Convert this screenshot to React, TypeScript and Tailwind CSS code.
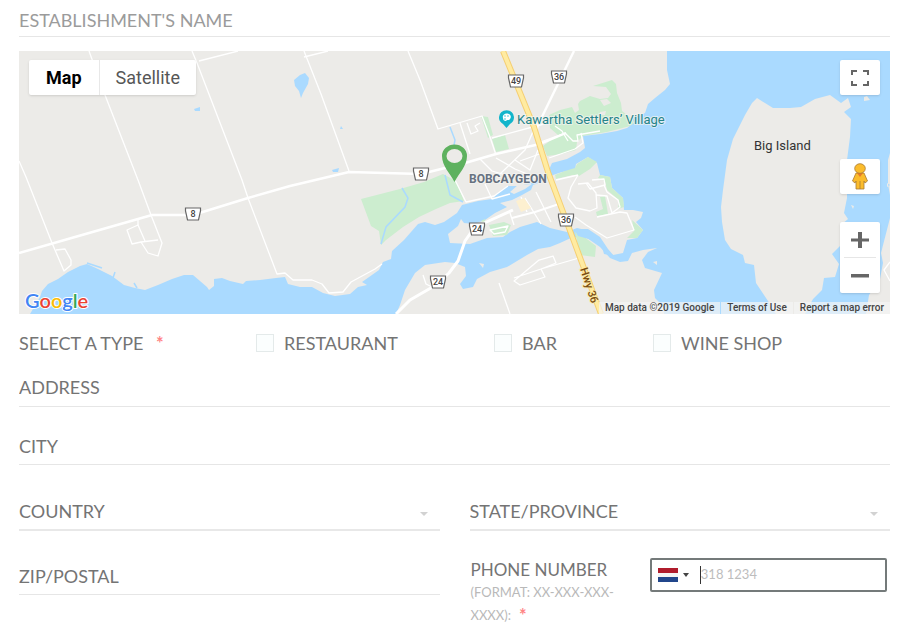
import { useId } from 'react'

const LABEL_FONT = "font-['Lato','Noto_Sans',sans-serif]"
const MAP_FONT = "font-['Roboto','Inter',sans-serif]"

const shields = [
  { x: 193, y: 214, n: '8' },
  { x: 421, y: 174, n: '8' },
  { x: 516, y: 81, n: '49' },
  { x: 559, y: 77, n: '36' },
  { x: 566, y: 220, n: '36' },
  { x: 477, y: 229, n: '24' },
  { x: 438, y: 282, n: '24' },
]

const minorRoads = [
  'M19 161 26 177 52 243 64 271 71 265 71 260 65 249 56 250',
  'M89 51 105 95 138 180 151 215 162 243 158 256 148 253 141 242 158 240',
  'M141 242 132 244 127 230 138 225 145 241',
  'M138 225 138 219',
  'M192 51 197 63 242 180 248 198 277 274 285 273 293 280 312 280 322 284 329 293 343 292 351 282 375 269 382 264',
  'M199 61 238 51',
  'M304 51 321 94 349 171',
  'M304 57 328 51',
  'M408 51 420 80 438 129 482 116 490 137 496 155',
  'M460 123 470 154',
  'M467 123 471 134 478 131 475 126 480 123',
  'M492 138 540 125 552 122',
  'M480 159 492 171 509 176',
  'M496 158 515 169 532 176 546 181',
  'M520 161 545 152',
  'M500 174 525 150 538 120',
  'M515 160 530 170 538 150',
  'M485 184 492 199 510 194',
  'M455 180 466 202 494 196 508 186',
  'M510 213 514 225 M525 198 541 224 M536 192 551 222 M521 197 527 212',
  'M490 230 508 226 505 232 494 234Z',
  'M538 143 565 133 573 141 578 141 577 135 600 131',
  'M555 126 562 131 568 141',
  'M549 158 575 149 583 143 581 133',
  'M556 180 578 175',
  'M578 175 571 187 568 198 576 208 590 211 597 208 596 193 588 183 578 184',
  'M586 183 590 189 605 185 604 179 592 180',
  'M604 185 607 192 618 200 620 207 612 213 607 196 596 195',
  'M597 217 620 212 627 213 634 230 607 238 586 225 575 217',
  'M423 275 426 284 432 287',
  'M514 278 541 269 579 258 M539 260 553 256 556 263 541 269 545 277 520 285 514 281Z',
  'M499 283 510 314',
  'M890 281 884 270 890 262',
]

function AreaMap() {
  return (
    <svg
      className={`block h-full w-full ${MAP_FONT}`}
      viewBox="19 51 871 263"
      preserveAspectRatio="xMidYMid slice"
      role="img"
      aria-label="Map of Bobcaygeon"
    >
      <rect x="19" y="51" width="871" height="263" fill="#ecebe8" />

      {/* parks inland */}
      <g fill="#ccedcf">
        <path d="M361 199 400 189 424 182 443 174 456 181 464 201 450 203 436 209 419 217 403 227 386 240 381 245 379 231 371 226Z" />
        <path d="M481 116 488 117 493 135 488 138Z" />
        <path d="M492 139 505 135 509 149 496 152Z" />
        <path d="M549 115 560 110 572 107 575 113 579 110 578 104 580 101 590 96 600 99 608 98 611 94 606 87 593 86 612 80 616 84 617 93 621 103 622 111 632 119 634 125 607 132 583 136 577 142 576 150 562 154 547 156 543 146 558 135 550 128Z" />
      </g>
      <path d="M600 100 607 99 611 103 604 106Z M600 112 606 111 605 115 600 115Z" fill="#ecebe8" />

      {/* lakes and river */}
      <g fill="#aadaff">
        <path d="M30 314 40 297 42 291 48 284 58 279 68 272 80 266 87 264 98 269 112 276 124 285 135 288 145 290 158 285 172 279 184 275 193 275 200 281 207 287 209 290 214 286 214 279 222 278 230 281 243 284 246 281 260 280 276 278 285 277 288 284 300 287 312 287 323 293 335 296 350 294 358 287 367 285 362 282 379 270 383 262 391 259 392 251 404 240 418 224 425 222 435 225 444 222 457 213 462 205 478 201 492 199 502 190 508 186 520 186 540 180 548 172 552 163 567 159 580 152 585 148 583 136 600 134 617 131 627 128 634 123 632 118 645 113 648 104 655 98 665 90 670 84 667 70 667 51 890 51 890 314 664 314 663 306 655 298 654 290 662 273 645 268 642 260 648 252 657 248 643 250 632 253 628 261 620 262 610 258 600 247 587 238 573 237 560 243 550 247 538 249 527 255 507 267 490 272 477 279 473 287 463 289 460 284 466 276 465 267 455 263 445 262 425 265 415 273 405 290 400 305 396 314Z" />
        <path d="M300 75 305 73 309 78 308 84 303 93 301 98 299 91 295 86 294 80Z M194 109 200 107 200 111 195 111Z M332 170 339 168 338 172 333 172Z M341 126 343 129 340 129Z" />
      </g>
      <path d="M450 127 455 140 453 150 M445 175 450 195 463 202 M381 244 386 227 405 207 408 198 402 188 M87 263 102 268 M113 278 115 272 M134 283 137 288" fill="none" stroke="#aadaff" strokeWidth="1.5" />

      {/* town peninsula */}
      <path
        fill="#ecebe8"
        d="M448 234 458 226 461 219 464 223 474 224 485 220 495 213 507 207 500 203 512 200 522 195 531 190 533 185 541 182 553 175 562 172 575 170 576 164 588 157 597 163 600 175 610 177 612 188 623 198 624 210 633 210 643 212 641 218 636 222 643 230 637 238 627 240 623 253 613 255 605 250 597 238 590 231 577 228 567 232 550 228 537 222 520 227 510 232 503 237 487 238 470 244 450 243Z"
      />
      <path fill="#ecebe8" d="M510 192 518 185 532 184 525 189 514 194Z M479 263 484 264 483 268Z M653 262 657 261 657 265Z" />
      <g fill="#ccedcf">
        <path d="M555 175 565 171 575 168 577 164 588 157 597 162 590 169 579 176 573 175 556 179Z" />
        <path d="M600 175 610 177 612 188 623 198 624 207 618 209 619 200 607 190 605 181 598 178Z" />
        <path d="M600 197 605 196 608 214 597 216 596 212 603 209Z M632 220 643 230 637 238 627 238 634 231Z M575 232 583 236 596 246 595 257 580 255Z" />
        <path d="M489 225 504 222 511 225 507 235 493 236Z M481 221 485 219 485 223Z" />
      </g>
      <path fill="#aadaff" d="M574 229 588 229 600 237 608 249 614 256 604 254 602 247 592 240 578 236Z" />

      {/* Big Island */}
      <path
        fill="#ecebe8"
        d="M757 98 765 103 773 108 790 108 801 107 815 99 830 95 841 103 848 98 851 107 844 112 851 119 850 137 847 160 847 198 844 213 848 219 841 225 840 246 832 254 839 264 835 277 824 278 822 290 813 299 805 314 776 314 768 301 756 283 754 265 745 263 743 255 731 249 725 240 722 222 721 207 723 190 727 160 733 139 745 115 752 103Z"
      />
      <path fill="#ecebe8" d="M890 153 888 160 888 184 890 195Z M890 218 881 253 883 263 880 279 869 295 866 314 890 314Z M864 97 867 96 870 100 864 101Z M887 183 890 185 887 187Z M851 205 854 206 853 209Z" />

      {/* streets */}
      <g fill="none" stroke="#ffffff" strokeLinejoin="round">
        <g strokeWidth="1.3">
          {minorRoads.map((d) => (
            <path key={d} d={d} />
          ))}
        </g>
        <path d="M19 253 75 237 138 219 152 215 193 215 248 198 290 186 349 172 421 174 465 163 496 154 540 144 566 133" strokeWidth="2.4" />
        <path d="M574 51 555 90 538 125 535 135" strokeWidth="2.4" />
        <path d="M396 314 410 300 436 285 449 273 458 261 465 241 472 231 482 224 513 210" strokeWidth="3" />
        <path d="M512 218 535 212 559 204" strokeWidth="2" />
      </g>
      <path d="M516 201 524 198 531 208 521 212Z" fill="#fdf0d0" />
      <path d="M503 51 534 127 548 172 572 236 601 314" fill="none" stroke="#f5cf73" strokeWidth="6" />
      <path d="M503 51 534 127 548 172 572 236 601 314" fill="none" stroke="#ffeba1" strokeWidth="4" />

      {/* route shields */}
      {shields.map((s) => (
        <g key={`${s.x}-${s.y}`} transform={`translate(${s.x} ${s.y})`}>
          <path d="M-7.5 -6H7.5V-3L5.5 6H-5.5L-7.5 -3Z" fill="#fff" stroke="#666" strokeWidth="1.2" />
          <text y="3" textAnchor="middle" fontSize="9" fontWeight="500" fill="#444">
            {s.n}
          </text>
        </g>
      ))}

      {/* place names */}
      <g stroke="#f5f4f1" strokeWidth="2" strokeOpacity=".7" paintOrder="stroke">
        <text x="517" y="124" fontSize="13" fill="#258489">Kawartha Settlers’ Village</text>
        <text x="469" y="183" fontSize="12" fontWeight="700" fill="#667180">BOBCAYGEON</text>
        <text x="754" y="150" fontSize="13" fill="#333" stroke="none">Big Island</text>
        <text transform="translate(580 269) rotate(72)" fontSize="11" fontWeight="500" fill="#7a4d10" stroke="#ffeba1">Hwy 36</text>
      </g>

      <path d="M506.500 128 503 124C499 121 499 119 499 117A7.500 6.800 0 0 1 514 117C514 120 513 122 510 124Z" fill="#12b5cb" />
      <path d="M503 118A4 3.500 0 1 1 510 119C509 121 507 119 506 121C504 121 503 120 503 118Z" fill="#fff" />
      <g fill="#12b5cb">
        <circle cx="505" cy="116" r=".7" />
        <circle cx="508" cy="116" r=".7" />
        <circle cx="505" cy="119" r=".7" />
      </g>

      {/* selected location */}
      <path d="M454.500 182C450 173 442 166 442 156A12.500 11.500 0 0 1 467 156C467 166 459 173 454.500 182Z" fill="#5eb15f" />
      <ellipse cx="454.500" cy="156" rx="8" ry="7" fill="#ecebe8" />

      <text x="25" y="308" fontSize="20" fontWeight="600" stroke="#fff" strokeWidth="2" strokeLinejoin="round" paintOrder="stroke" className="font-['Lato',sans-serif]">
        <tspan fill="#4285f4">G</tspan>
        <tspan fill="#ea4335">o</tspan>
        <tspan fill="#fbbc05">o</tspan>
        <tspan fill="#4285f4">g</tspan>
        <tspan fill="#34a853">l</tspan>
        <tspan fill="#ea4335">e</tspan>
      </text>
    </svg>
  )
}

function MapPanel() {
  const control = 'flex w-10 items-center justify-center rounded-xs bg-white shadow-sm'
  return (
    <section className="relative h-[263px] overflow-hidden">
      <AreaMap />
      <div className={`absolute top-[9px] left-[10px] flex h-[35px] rounded-xs bg-white text-lg shadow-sm ${MAP_FONT}`}>
        <button type="button" className="border-r border-[#e8e8e8] px-[17px] font-bold text-black">Map</button>
        <button type="button" className="px-4 text-[#565656]">Satellite</button>
      </div>
      <div className="absolute top-[9px] right-[10px]">
        <button type="button" aria-label="Toggle fullscreen view" className={`${control} h-[35px]`}>
          <svg width="18" height="16" viewBox="0 0 18 16" fill="none" stroke="#666" strokeWidth="2">
            <path d="M1 5V1H6M12 1H17V5M17 11V15H12M6 15H1V11" />
          </svg>
        </button>
        <button type="button" aria-label="Street View" className={`${control} mt-16 h-[35px]`}>
          <svg width="18" height="28" viewBox="0 0 18 28" fill="#fbbc2c" stroke="#a87b35" strokeWidth=".8">
            <path d="M5 10H13L16.500 18 14 20 13 18V26H5V18L4 20 1.500 18Z" />
            <path d="M9 18V26" />
            <path d="M6 10H12L9 14Z" fill="#e8792b" stroke="none" />
            <ellipse cx="9" cy="5.500" rx="5.300" ry="4.800" />
          </svg>
        </button>
        <div className="mt-7 w-10 rounded-xs bg-white shadow-sm">
          <button type="button" aria-label="Zoom in" className="flex h-[35px] w-full items-center justify-center">
            <svg width="18" height="16" viewBox="0 0 18 16" fill="#666">
              <path d="M7 0H11V6.500H18V9.500H11V16H7V9.500H0V6.500H7Z" />
            </svg>
          </button>
          <div className="mx-1 h-px bg-[#e6e6e6]" />
          <button type="button" aria-label="Zoom out" className="flex h-[35px] w-full items-center justify-center">
            <svg width="18" height="4" viewBox="0 0 18 4" fill="#666">
              <path d="M0 0H18V3.500H0Z" />
            </svg>
          </button>
        </div>
      </div>
      <div className={`absolute right-0 bottom-0 flex h-3 gap-px text-[10px] leading-3 font-medium text-[#444] ${MAP_FONT}`}>
        <span className="bg-[#f5f5f5]/70 px-[6px]">Map data ©2019 Google</span>
        <a href="#terms" className="bg-[#f5f5f5]/70 px-[6px]">Terms of Use</a>
        <a href="#report" className="bg-[#f5f5f5]/70 px-[6px]">Report a map error</a>
      </div>
    </section>
  )
}

function TextField({ label, className }: { label: string; className: string }) {
  return (
    <input
      type="text"
      aria-label={label}
      placeholder={label}
      className={`block w-full border-b border-[#e6e6e6] bg-transparent outline-none ${className}`}
    />
  )
}

function SelectField({ label }: { label: string }) {
  return (
    <div className="relative">
      <select aria-label={label} className="block h-10 w-full appearance-none border-b-2 border-[#e8e8e8] bg-transparent pt-px text-[#747474] outline-none">
        <option>{label}</option>
      </select>
      <svg className="pointer-events-none absolute top-[21px] right-3" width="8" height="4" viewBox="0 0 8 4" fill="#d2d2d2">
        <path d="M0 0H8L4 4Z" />
      </svg>
    </div>
  )
}

function TypeOption({ label }: { label: string }) {
  return (
    <label className="flex items-center gap-[10px]">
      <input type="checkbox" className="size-[18px] appearance-none border border-[#e4eaea] bg-[#fbfefe] checked:bg-[#5eb15f]" />
      {label}
    </label>
  )
}

export default function App() {
  const phoneId = useId()
  return (
    <form className={`bg-white pr-8 pl-[19px] text-lg text-[#747474] ${LABEL_FONT}`}>
      <TextField label="ESTABLISHMENT'S NAME" className="h-[37px] pt-1 placeholder:text-[#9b9b9b]" />
      <div className="mt-[14px]">
        <MapPanel />
      </div>

      <fieldset className="grid h-[58px] grid-cols-[237fr_238fr_159fr_237fr] items-center">
        <div>
          SELECT A TYPE <span className="ml-2 font-bold text-[#ff8585]">*</span>
        </div>
        <TypeOption label="RESTAURANT" />
        <TypeOption label="BAR" />
        <TypeOption label="WINE SHOP" />
      </fieldset>

      <TextField label="ADDRESS" className="h-[35px] pb-1 placeholder:text-[#747474]" />
      <TextField label="CITY" className="mt-[22px] h-9 pb-[2px] placeholder:text-[#747474]" />

      <div className="mt-[26px] grid grid-cols-2 gap-x-[30px]">
        <SelectField label="COUNTRY" />
        <SelectField label="STATE/PROVINCE" />
        <div className="pt-[26px]">
          <TextField label="ZIP/POSTAL" className="h-[38px] placeholder:text-[#747474]" />
        </div>
        <div className="flex items-start justify-between pt-[27px] pr-[3px] pl-px">
          <label htmlFor={phoneId} className="text-[17px] leading-[23px]">
            PHONE NUMBER
            <span className="block text-[13px] text-[#b9b9b9]">(FORMAT: XX-XXX-XXX-</span>
            <span className="flex gap-2 text-[13px] text-[#b9b9b9]">
              <span>XXXX):</span>
              <span className="text-lg leading-[23px] font-bold text-[#ff8585]">*</span>
            </span>
          </label>
          <div className="flex h-[34px] w-[237px] items-center rounded-xs border-2 border-[#747a7a] pl-[6px]">
            <button type="button" aria-label="Netherlands" className="flex items-center gap-[5px]">
              <svg width="20" height="14" viewBox="0 0 20 14">
                <rect width="20" height="14" fill="#f4f4f4" />
                <rect width="20" height="5" fill="#b01c2c" />
                <rect y="9" width="20" height="5" fill="#21468b" />
              </svg>
              <svg width="6" height="4" viewBox="0 0 6 4" fill="#444">
                <path d="M0 0H6L3 4Z" />
              </svg>
            </button>
            <span className="ml-[11px] h-[18px] w-px bg-[#333]" />
            <input id={phoneId} type="tel" placeholder="318 1234" className="w-full min-w-0 bg-transparent pb-[2px] text-[13px] outline-none placeholder:text-[#bdbdbd]" />
          </div>
        </div>
      </div>
    </form>
  )
}
